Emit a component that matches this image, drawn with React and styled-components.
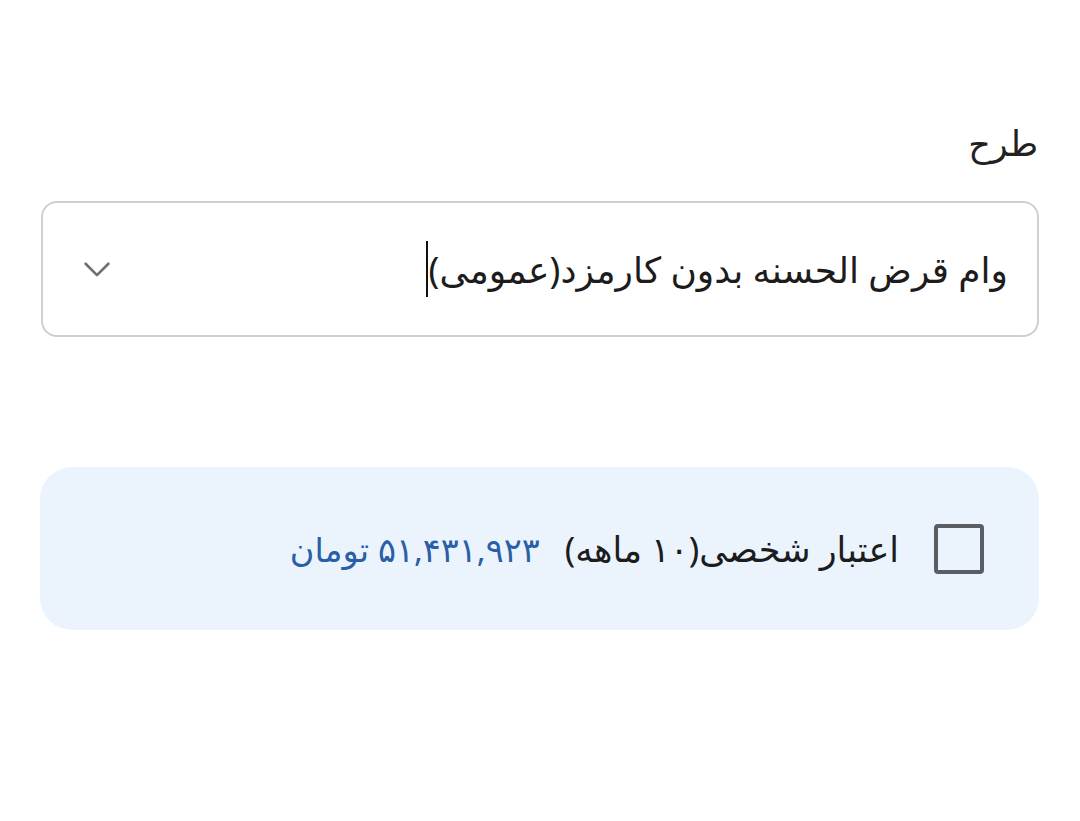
import React from "react";
import styled, { createGlobalStyle } from "styled-components";

const GlobalStyle = createGlobalStyle`
  body {
    margin: 0;
    background: #ffffff;
    font-family: "Noto Sans", "DejaVu Sans", sans-serif;
  }
`;

const Page = styled.div`
  direction: rtl;
  width: 1080px;
  height: 821px;
  box-sizing: border-box;
  padding: 115px 41px 0 40px;
  display: flex;
  flex-direction: column;
`;

const Label = styled.div`
  font-size: 35px;
  color: #222;
  line-height: 56px;
  padding-right: 1px;
  margin-bottom: 30px;
`;

const SelectBox = styled.div`
  height: 136px;
  margin-left: 1px;
  box-sizing: border-box;
  border: 2px solid #cfcfcf;
  border-radius: 16px;
  display: flex;
  align-items: center;
  padding: 0 29px 0 33px;
`;

const SelectText = styled.div`
  font-size: 36px;
  color: #1c1c1c;
  display: flex;
  align-items: center;
`;

const Caret = styled.span`
  display: inline-block;
  width: 2px;
  height: 56px;
  background: #111;
  margin-right: 1px;
`;

const Chevron = styled.svg`
  margin-right: auto;
  width: 42px;
  height: 42px;
`;

const Card = styled.div`
  margin-top: 130px;
  height: 163px;
  border-radius: 32px;
  background: #ebf4fd;
  display: flex;
  align-items: center;
  padding: 0 55px 0 0;
  gap: 35px;
`;

const Box = styled.div`
  width: 50px;
  height: 50px;
  box-sizing: border-box;
  border: 4px solid #5a5d61;
  border-radius: 4px;
  flex-shrink: 0;
`;

const Details = styled.div`
  display: flex;
  align-items: center;
  gap: 25px;
  font-size: 35px;
`;

const ItemText = styled.span`
  color: #1c1c1c;
`;

const Amount = styled.span`
  color: #2a5ea6;
  font-size: 33.5px;
`;

export default function App() {
  return (
    <>
      <GlobalStyle />
      <Page>
        <Label>طرح</Label>
        <SelectBox>
          <SelectText>
            وام قرض الحسنه بدون کارمزد(عمومی)
            <Caret />
          </SelectText>
          <Chevron viewBox="0 0 24 24" fill="none" stroke="#707070" strokeWidth="1.5" strokeLinecap="round" strokeLinejoin="round">
            <path d="M5.5 9l6.5 6.5 6.5-6.5" />
          </Chevron>
        </SelectBox>
        <Card>
          <Box />
          <Details>
            <ItemText>اعتبار شخصی(۱۰ ماهه)</ItemText>
            <Amount>۵۱,۴۳۱,۹۲۳ تومان</Amount>
          </Details>
        </Card>
      </Page>
    </>
  );
}
